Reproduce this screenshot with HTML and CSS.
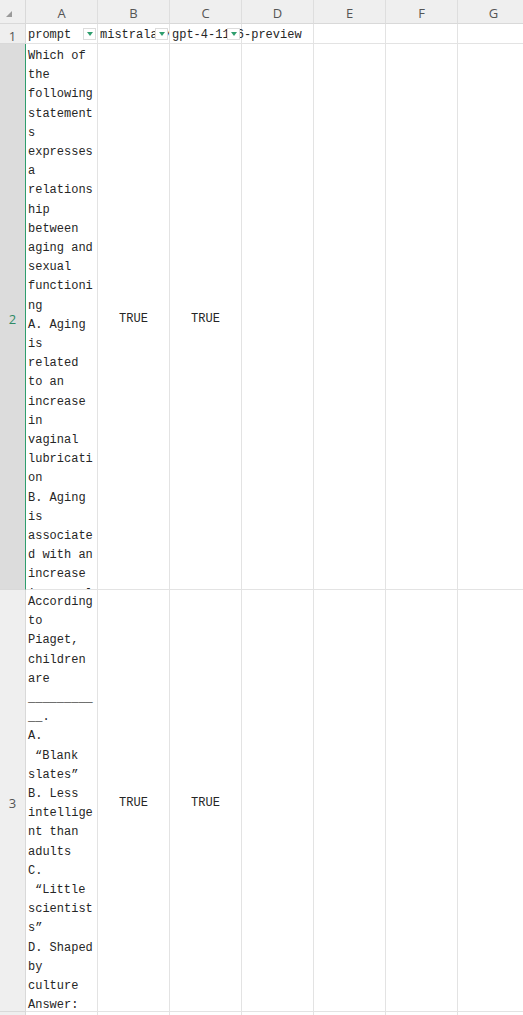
FILE: index.html
```html
<!DOCTYPE html>
<html lang="en">
<head>
<meta charset="utf-8">
<title>Sheet</title>
<link rel="stylesheet" href="styles.css">
</head>
<body>
<div class="sheet">
  <div class="corner">
    <svg class="corner-icon" width="6" height="6" viewBox="0 0 6 6"><polygon points="6,0 6,6 0,6" fill="#9a9a9a"/></svg>
  </div>
  <div class="colhead">A</div>
  <div class="colhead">B</div>
  <div class="colhead">C</div>
  <div class="colhead">D</div>
  <div class="colhead">E</div>
  <div class="colhead">F</div>
  <div class="colhead">G</div>

  <div class="rowhead">1</div>
  <div class="cell head clip">prompt<span class="filter"><span class="tri"></span></span></div>
  <div class="cell head"><span class="clipbox">mistralai/Mixtral-8x7B-Instruct-v0.1</span><span class="filter"><span class="tri"></span></span></div>
  <div class="cell head spill">gpt-4-1106-preview<span class="filter"><span class="tri"></span></span></div>
  <div class="cell"></div>
  <div class="cell"></div>
  <div class="cell"></div>
  <div class="cell"></div>

  <div class="rowhead active">2</div>
  <div class="cell wrap">Which of the following statements expresses a relationship between aging and sexual functioning
A. Aging is related to an increase in vaginal lubrication
B. Aging is associated with an increase in sexual arousal
C. Aging is related to a decrease in interest
D. None of the above</div>
  <div class="cell mid">TRUE</div>
  <div class="cell mid">TRUE</div>
  <div class="cell"></div>
  <div class="cell"></div>
  <div class="cell"></div>
  <div class="cell"></div>

  <div class="rowhead">3</div>
  <div class="cell wrap">According to Piaget, children are ___________.
A. <span class="ql">“</span>Blank slates<span class="qr">”</span>
B. Less intelligent than adults
C. <span class="ql">“</span>Little scientists<span class="qr">”</span>
D. Shaped by culture
Answer:</div>
  <div class="cell mid">TRUE</div>
  <div class="cell mid">TRUE</div>
  <div class="cell"></div>
  <div class="cell"></div>
  <div class="cell"></div>
  <div class="cell"></div>

  <div class="rowhead">4</div>
  <div class="cell"></div>
  <div class="cell"></div>
  <div class="cell"></div>
  <div class="cell"></div>
  <div class="cell"></div>
  <div class="cell"></div>
  <div class="cell"></div>
</div>
</body>
</html>
```

FILE: styles.css
```css
html, body {
  margin: 0;
  padding: 0;
  background: #ffffff;
  overflow: hidden;
}

.sheet {
  display: grid;
  grid-template-columns: 26px repeat(7, 72px);
  grid-template-rows: 24px 20px 546px 422px 24px;
  width: 523px;
  overflow: hidden;
}

.corner,
.colhead {
  background: #efefef;
  border-bottom: 1px solid #d9d9d9;
  box-sizing: border-box;
}

.corner {
  border-right: 1px solid #d9d9d9;
  position: relative;
}

.corner-icon {
  position: absolute;
  left: 6px;
  top: 11px;
}

.colhead {
  border-right: 1px solid #dedede;
  display: flex;
  align-items: center;
  justify-content: center;
  padding-top: 3px;
  font-family: "Open Sans", "Liberation Sans", sans-serif;
  font-size: 13px;
  color: #555555;
}

.rowhead {
  background: #efefef;
  border-right: 1px solid #d9d9d9;
  border-bottom: 1px solid #d9d9d9;
  box-sizing: border-box;
  display: flex;
  align-items: center;
  justify-content: center;
  padding-top: 4px;
  font-family: "Open Sans", "Liberation Sans", sans-serif;
  font-size: 13px;
  color: #555555;
}

.rowhead.active {
  background: #dcdcdc;
  border-right-color: #2f9e6e;
  color: #2f8a66;
}

.cell {
  border-right: 1px solid #e3e3e3;
  border-bottom: 1px solid #e3e3e3;
  box-sizing: border-box;
  font-family: "Liberation Mono", "Noto Sans CJK SC", monospace;
  font-size: 12px;
  color: #262626;
  min-width: 0;
}

.head {
  position: relative;
  padding-left: 2px;
  padding-top: 2px;
  line-height: 19px;
  white-space: nowrap;
}

.clip {
  overflow: hidden;
}

.clipbox {
  display: block;
  overflow: hidden;
  white-space: nowrap;
}

.spill {
  overflow: visible;
  z-index: 1;
}

.filter {
  position: absolute;
  right: 1px;
  top: 4px;
  width: 13px;
  height: 12px;
  box-sizing: border-box;
  background: #ffffff;
  border: 1px solid #dcdcdc;
  display: flex;
  align-items: center;
  justify-content: center;
}

.tri {
  width: 0;
  height: 0;
  border-left: 3px solid transparent;
  border-right: 3px solid transparent;
  border-top: 4px solid #2f9e6e;
}

.wrap {
  padding: 3px 1px 0 2px;
  line-height: 19.2px;
  white-space: pre-wrap;
  overflow-wrap: anywhere;
  overflow: hidden;
}

.ql {
  padding-left: 7px;
}

.qr {
  padding-right: 7px;
}

.mid {
  display: flex;
  align-items: center;
  justify-content: center;
  padding-top: 4px;
}
```
